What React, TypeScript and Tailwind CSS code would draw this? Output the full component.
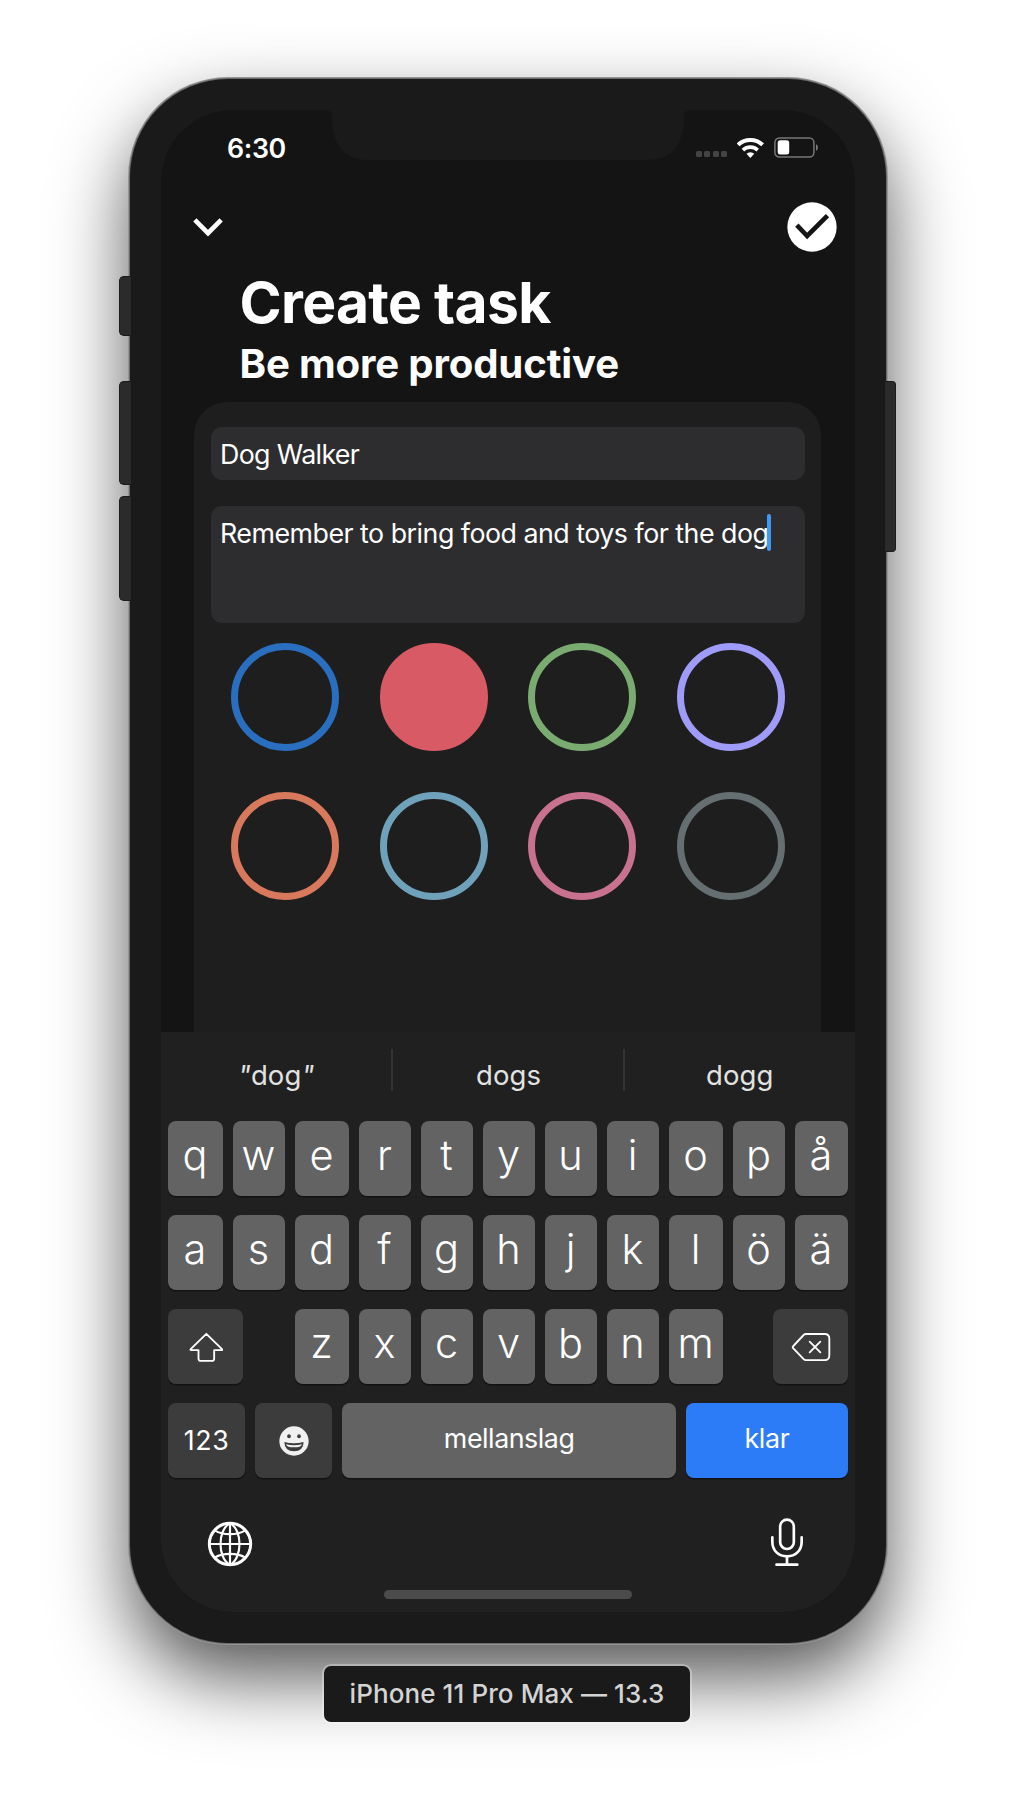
import type { ReactNode } from "react";

const swatches = [
  { name: "blue", cls: "border-[#2a6ebf]" },
  { name: "red", cls: "border-[#d75a65] bg-[#d75a65]" },
  { name: "green", cls: "border-[#7aac71]" },
  { name: "purple", cls: "border-[#9f9bf8]" },
  { name: "orange", cls: "border-[#d8785c]" },
  { name: "teal", cls: "border-[#6fa2ba]" },
  { name: "pink", cls: "border-[#c8728f]" },
  { name: "gray", cls: "border-[#656f71]" },
];

const widths = ["w-[55px]", "w-[52px]", "w-[54px]", "w-[52px]", "w-[52px]", "w-[52px]", "w-[52px]", "w-[52px]", "w-[54px]", "w-[52px]", "w-[53px]"];

function Key({ children, className }: { children: ReactNode; className: string }) {
  return (
    <button
      type="button"
      className={`flex h-[75px] shrink-0 items-center justify-center rounded-[8px] shadow-[0_1.5px_0_#121212] ${className}`}
    >
      {children}
    </button>
  );
}

function Letter({ char, width }: { char: string; width: string }) {
  return (
    <Key className={`bg-[#636363] pr-[1px] pb-[7px] text-[41.5px] leading-[42px] font-[340] text-white ${width}`}>{char}</Key>
  );
}

function StatusIcons() {
  return (
    <div className="flex items-center">
      <div className="mt-[13px] flex gap-[2.5px]">
        {[0, 1, 2, 3].map((i) => (
          <span key={i} className="size-[6px] rounded-[1.5px] bg-[#444444]" />
        ))}
      </div>
      <svg className="ml-[10px] h-[20px] w-[27px]" viewBox="712 232 81 60" fill="none" stroke="#fff">
        <path d="M715.2 252.5A54 54 0 0 1 788.8 252.5" strokeWidth="12" />
        <path d="M729.8 268.2A32.5 32.5 0 0 1 774.2 268.2" strokeWidth="11" />
        <path d="M752 292L740.4 279.6A17 17 0 0 1 763.6 279.6Z" fill="#fff" stroke="none" />
      </svg>
      <svg className="ml-[10px] h-[21px] w-[45px]" viewBox="0 0 45 21" fill="none">
        <rect x="0.9" y="0.9" width="39" height="19.2" rx="4.5" stroke="#777777" strokeWidth="1.5" />
        <rect x="3.7" y="3.3" width="11.5" height="14.2" rx="2.5" fill="#fff" />
        <path d="M42 7.2C44.6 8.4 44.6 12.6 42 13.8Z" fill="#7a7a7a" />
      </svg>
    </div>
  );
}

function Keyboard() {
  return (
    <div className="flex h-[580px] shrink-0 flex-col bg-[#202020]">
      <div className="flex h-[89px] items-start text-[27.5px] leading-[86px] tracking-[0.1px] text-[#e2e2e2]">
        <div className="flex-1 pr-[1px] text-center">
          <span className="italic">"</span>dog<span className="italic">"</span>
        </div>
        <div className="mt-[17px] -ml-[1px] h-[42px] w-[2px] bg-[#333333]" />
        <div className="flex-1 text-center">dogs</div>
        <div className="mt-[17px] -ml-[1px] h-[42px] w-[2px] bg-[#333333]" />
        <div className="flex-1 text-center">dogg</div>
      </div>

      <div className="flex flex-col gap-[19px] px-[7px]">
        <div className="flex gap-[10px]">
          {[..."qwertyuiopå"].map((c, i) => (
            <Letter key={c} char={c} width={widths[i]} />
          ))}
        </div>
        <div className="flex gap-[10px]">
          {[..."asdfghjklöä"].map((c, i) => (
            <Letter key={c} char={c} width={widths[i]} />
          ))}
        </div>
        <div className="flex">
          <Key className="w-[75px] bg-[#3c3c3c]">
            <svg className="mt-[1px] ml-[1px] h-[30px] w-[34px]" viewBox="268 126 102 90" fill="none" stroke="#fff" strokeWidth="5.500" strokeLinejoin="round">
              <path d="M320 131.500L273 177.500Q271 180.500 274.500 180.500H296.500V206Q296.500 212.500 303 212.500H337Q343.500 212.500 343.500 206V180.500H365.500Q369 180.500 367 177.500Z" />
            </svg>
          </Key>
          <div className="ml-[52px] flex gap-[10px]">
            {[..."zxcvbnm"].map((c, i) => (
              <Letter key={c} char={c} width={widths[i + 2]} />
            ))}
          </div>
          <Key className="ml-auto w-[75px] bg-[#3c3c3c]">
            <svg className="mt-[1px] h-[30px] w-[40px]" viewBox="873 126 120 90" fill="none" stroke="#fff" strokeWidth="5.500" strokeLinejoin="round" strokeLinecap="round">
              <path d="M918 132H974Q988 132 988 146V196Q988 210.500 974 210.500H918Q914 210.500 911 207.500L880 175Q876.500 171.500 880 168L911 135Q914 132 918 132Z" />
              <path d="M929 155L961 187M961 155L929 187" />
            </svg>
          </Key>
        </div>
        <div className="flex justify-between text-[26.8px] leading-none text-white">
          <Key className="w-[77px] bg-[#3c3c3c] tracking-[0.6px]">123</Key>
          <Key className="w-[77.500px] bg-[#3c3c3c]">
            <svg className="h-[30px] w-[30px]" viewBox="537 406 90 90">
              <circle cx="582" cy="451" r="44" fill="#f0f0f0" />
              <ellipse cx="567" cy="437" rx="5.500" ry="6" fill="#3c3c3c" />
              <ellipse cx="597" cy="437" rx="5.500" ry="6" fill="#3c3c3c" />
              <path d="M553 454Q582 462 611 454Q610 482 582 482Q554 482 553 454Z" fill="#3c3c3c" />
              <path d="M558 460.500Q582 467 606 460.500Q603 470 582 470Q561 470 558 460.500Z" fill="#f0f0f0" />
            </svg>
          </Key>
          <Key className="w-[334px] bg-[#636363] pb-[5px] tracking-[-0.45px]">mellanslag</Key>
          <Key className="w-[162px] bg-[#2d7cf7] pb-[5px] tracking-[-0.35px]">klar</Key>
        </div>
      </div>

      <div className="flex h-[112px] shrink-0 items-start justify-between pr-[51px] pl-[46px]">
        <svg className="mt-[43px] size-[46px]" viewBox="321 693 138 138" fill="none" stroke="#fff" strokeWidth="6.500">
          <circle cx="390" cy="762" r="62" strokeWidth="9" />
          <path d="M390 700V824M328 762H452" />
          <path d="M390 700C352 718 352 806 390 824M390 700C428 718 428 806 390 824" />
          <path d="M345 722C368 736 412 736 435 722M345 802C368 788 412 788 435 802" />
        </svg>
        <svg className="mt-[40px] h-[50px] w-[34px]" viewBox="810 684 102 150" fill="none" stroke="#fff" strokeWidth="8" strokeLinecap="round">
          <rect x="840.500" y="689" width="41" height="88" rx="20.500" />
          <path d="M817 742V755C817 782 836 799 861 799C886 799 905 782 905 755V742" />
          <path d="M861 800V823M829.500 824H892" />
        </svg>
      </div>
      <div className="mx-auto h-[9px] w-[248px] rounded-full bg-[#4b4b4b]" />
    </div>
  );
}

export default function App() {
  return (
    <main className="flex h-[1794px] w-[1016px] flex-col items-start overflow-hidden bg-white pt-[79px] font-['Inter',sans-serif]">
      <div className="relative ml-[130px] h-[1564px] w-[756px] shrink-0 rounded-[98px] bg-[#1a1a1a] pt-[31px] pl-[31px] shadow-[0_0_0_1px_#6a6a6a,0_0_0_2px_#959595,0_34px_76px_rgba(0,0,0,0.68)]">
        <div className="absolute top-[197px] -left-[11px] h-[60px] w-[12px] rounded-l-[5px] border border-r-0 border-[#1c1c1c] bg-[#2b2b2b]" />
        <div className="absolute top-[302px] -left-[11px] h-[104px] w-[12px] rounded-l-[5px] border border-r-0 border-[#1c1c1c] bg-[#2b2b2b]" />
        <div className="absolute top-[417px] -left-[11px] h-[105px] w-[12px] rounded-l-[5px] border border-r-0 border-[#1c1c1c] bg-[#2b2b2b]" />
        <div className="absolute top-[302px] -right-[10px] h-[171px] w-[11px] rounded-r-[4px] border border-l-0 border-[#1c1c1c] bg-[#2b2b2b]" />

        <div className="flex h-[1502px] w-[694px] flex-col overflow-hidden rounded-[72px] bg-[#141414] text-white">
          <div className="flex h-[75px] shrink-0 items-center justify-between pr-[36px] pl-[66px]">
            <span className="pt-[2px] text-[26.8px] font-semibold tracking-[-0.4px]">6:30</span>
            <StatusIcons />
          </div>

          <div className="flex h-[82px] shrink-0 items-center justify-between pt-[2px] pr-[18px] pl-[31px]">
            <svg className="h-[20px] w-[32px]" viewBox="276 470 96 60" fill="none" stroke="#fff" strokeWidth="14">
              <path d="M284.500 478.500L324 518.500L363.500 478.500" />
            </svg>
            <svg className="size-[50px]" viewBox="862 424 150 150" fill="none">
              <circle cx="937" cy="499" r="74" fill="#fff" />
              <path d="M891.500 493.500L922.500 526L983.500 465" stroke="#141414" strokeWidth="14" />
            </svg>
          </div>

          <h1 className="mt-[6px] pl-[78.500px] text-[57px] leading-[60px] font-bold tracking-[-0.68px]">Create task</h1>
          <h2 className="mt-[7px] pl-[78.500px] text-[40.2px] leading-[48px] font-bold tracking-[-0.17px]">Be more productive</h2>

          <div className="mt-[14px] mr-[34px] ml-[33px] flex-1 rounded-t-[33px] bg-[#1e1e1e] pr-[16px] pl-[17px] pt-[25px] text-[26.8px]">
            <div className="h-[53px] rounded-[11px] bg-[#2d2d2f] pl-[9px] leading-[54px] tracking-[-0.65px]">Dog Walker</div>
            <div className="mt-[26px] flex h-[117px] items-start rounded-[11px] bg-[#2d2d2f] pt-[8px] pl-[9px] leading-[38.500px] tracking-[-0.51px]">
              <span className="whitespace-nowrap">Remember to bring food and toys for the dog</span>
              <span className="-ml-[1px] h-[37px] w-[4px] shrink-0 rounded-full bg-[#3c9cf4]" />
            </div>
            <div className="grid h-[297px] grid-cols-4 grid-rows-2 place-items-center">
              {swatches.map((s) => (
                <button
                  key={s.name}
                  type="button"
                  aria-label={s.name}
                  className={`size-[108px] rounded-full border-[7px] ${s.cls}`}
                />
              ))}
            </div>
          </div>

          <Keyboard />
        </div>

        <svg className="absolute top-[30px] left-[194px] h-[51px] w-[368px]" viewBox="324 109 368 51" fill="#1a1a1a">
          <path d="M324 109V110C330 110 332 112 332 118C332 143 343 160 368 160H648C673 160 684 143 684 118C684 112 686 110 692 110V109Z" />
        </svg>
      </div>

      <div className="relative mt-[23px] ml-[324px] flex h-[55.500px] w-[366px] shrink-0 items-center justify-center rounded-[7px] bg-[#1a1a1a] text-[26px] font-medium tracking-[0.09px] whitespace-nowrap text-[#d4d4d4] shadow-[0_0_0_2px_rgba(255,255,255,0.3)]">
        iPhone 11 Pro Max — 13.3
      </div>
    </main>
  );
}
